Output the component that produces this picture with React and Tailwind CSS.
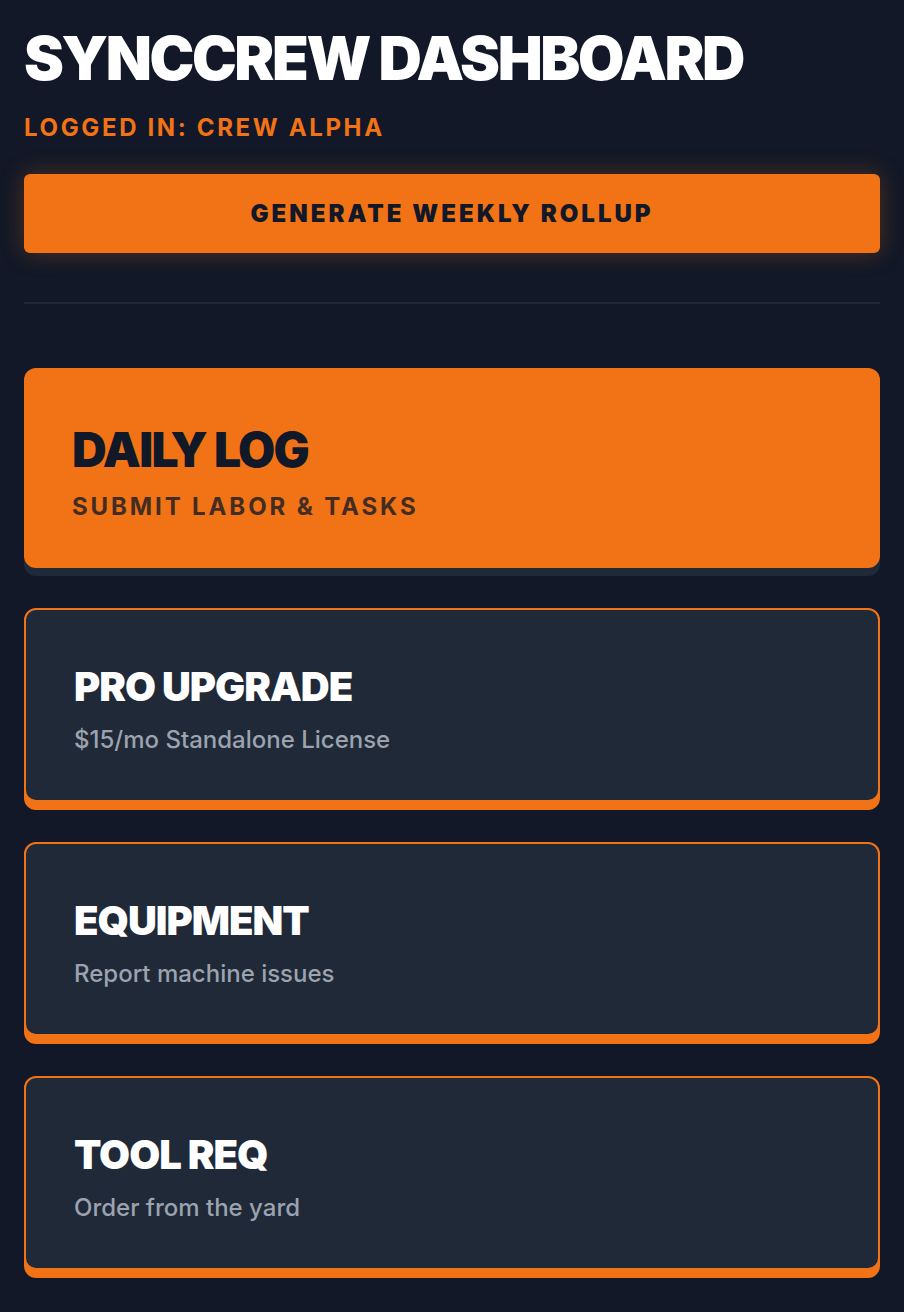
export default function App() {
  const cards = [
    { title: "PRO UPGRADE", sub: "$15/mo Standalone License" },
    { title: "EQUIPMENT", sub: "Report machine issues" },
    { title: "TOOL REQ", sub: "Order from the yard" },
  ];
  return (
    <div
      className="min-h-[1312px] w-full bg-[#121827] px-6 pt-[28px] pb-10"
      style={{ fontFamily: "Inter, 'Noto Sans', sans-serif" }}
    >
      <h1 className="text-6xl leading-none font-black tracking-[-0.04em] text-white">
        SYNCCREW DASHBOARD
      </h1>
      <p className="mt-[24px] text-2xl leading-8 font-bold tracking-[0.11em] text-[#f17316]">
        LOGGED IN: CREW ALPHA
      </p>
      <button className="mt-[30px] flex h-[79px] w-full items-center justify-center rounded-md bg-[#f17316] text-2xl font-black tracking-[0.125em] text-[#111827] shadow-[0_0_24px_rgba(241,115,22,0.28)]">
        GENERATE WEEKLY ROLLUP
      </button>
      <div className="mt-[49px] h-[2px] w-full bg-[#1f2937]" />
      <div className="mt-[64px] flex flex-col gap-10">
        <div className="rounded-xl bg-[#f17316] px-12 pt-[50px] pb-[45px] shadow-[0_8px_0_#1f2937]">
          <h2 className="text-5xl leading-[63px] font-black tracking-[-0.035em] text-[#111827]">
            DAILY LOG
          </h2>
          <p className="mt-[10px] text-2xl leading-8 font-bold tracking-[0.12em] text-[#432c22]">
            SUBMIT LABOR &amp; TASKS
          </p>
        </div>
        {cards.map((c) => (
          <div
            key={c.title}
            className="rounded-xl border-2 border-[#f17316] bg-[#1f2937] px-12 pt-[50px] pb-[44px] shadow-[0_8px_0_#f17316]"
          >
            <h2 className="text-[40px] leading-[54px] font-black tracking-tight text-white">
              {c.title}
            </h2>
            <p className="mt-[10px] text-2xl leading-8 font-medium text-[#9ca3af]">
              {c.sub}
            </p>
          </div>
        ))}
      </div>
    </div>
  );
}
